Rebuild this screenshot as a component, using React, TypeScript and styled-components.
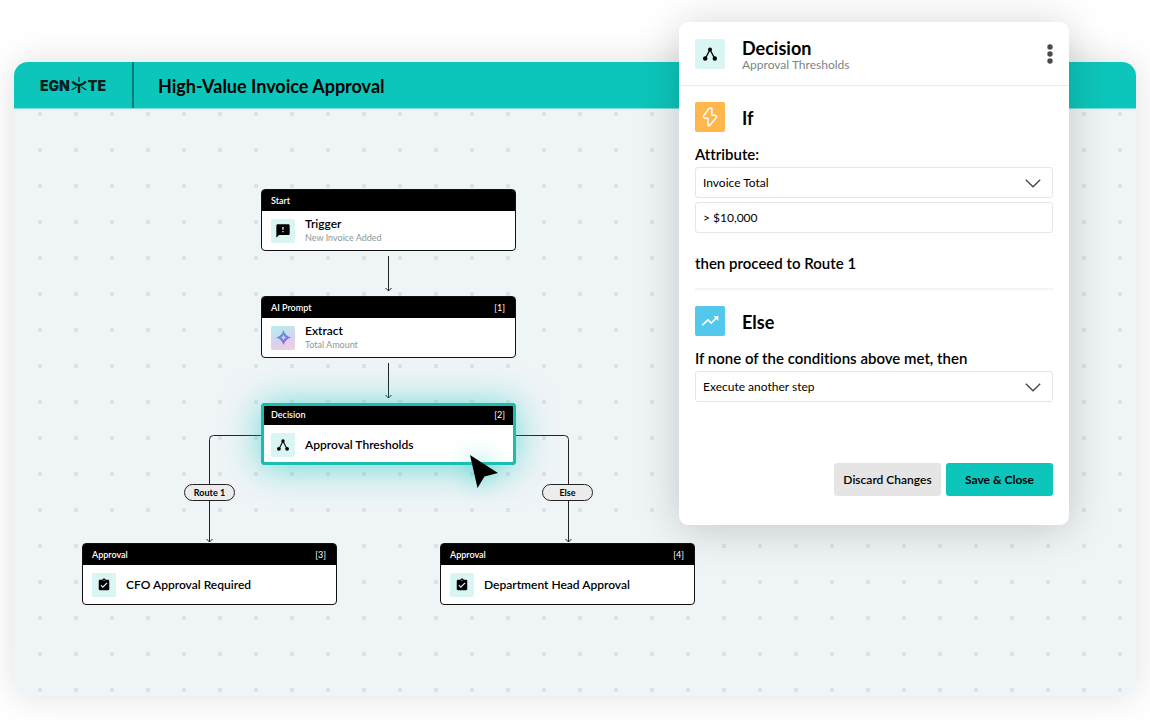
import React from "react";
import styled, { createGlobalStyle, css } from "styled-components";
import { MdAssignmentTurnedIn, MdFeedback, MdTrendingUp } from "react-icons/md";

const teal = "#0dc6bb";

const GlobalStyle = createGlobalStyle`
  *, *::before, *::after { box-sizing: border-box; }
  body {
    margin: 0;
    background: #fff;
    color: #000;
    font-family: Lato, "Liberation Sans", sans-serif;
    font-variant-ligatures: none;
  }
  button, input, select { font-family: inherit; color: inherit; }
  h1, h2, h3, p { margin: 0; }
  svg { display: block; }
`;

const Page = styled.div`
  display: flex;
  min-height: 100vh;
  padding: 62px 14px 24px;
`;

const Window = styled.main`
  position: relative;
  display: flex;
  flex: 1;
  flex-direction: column;
  border-radius: 14px;
  box-shadow: 0 0 36px rgba(0, 0, 0, 0.13);
`;

const TopBar = styled.header`
  display: flex;
  height: 47px;
  border-bottom: 1px solid #7fdcd6;
  border-radius: 14px 14px 0 0;
  background: ${teal};
`;

const Brand = styled.a`
  display: flex;
  align-items: center;
  justify-content: center;
  width: 120px;
  padding-top: 2px;
  border-right: 2px solid #087c76;
  color: #06201f;
  font-family: Inter, sans-serif;
  font-size: 14px;
  font-weight: 900;
  line-height: 16px;
  text-decoration: none;
`;

const PageTitle = styled.h1`
  padding: 1px 0 0 24px;
  font-size: 18px;
  font-weight: 700;
  line-height: 47px;
`;

const Canvas = styled.section`
  position: relative;
  flex: 1;
  min-height: 587px;
  border-radius: 0 0 14px 14px;
  background-color: #eff4f7;
  background-image: conic-gradient(from 90deg at 32px 32px, #dde2e4 90deg, transparent 0);
  background-position: 28px 7px;
  background-size: 36px 36px;
  overflow: hidden;
`;

const Connectors = styled.svg`
  position: absolute;
  top: 0;
  left: 0;
  fill: none;
  stroke: #222;
`;

const NodeBox = styled.article<{ $x: number; $y: number; $selected?: boolean }>`
  position: absolute;
  left: ${(p) => p.$x}px;
  top: ${(p) => p.$y}px;
  width: 255px;
  height: 62px;
  border: 1px solid #111;
  border-radius: 4px;
  background: #fff;
  ${(p) =>
    p.$selected &&
    css`
      box-shadow: 0 2px 36px rgba(13, 198, 187, 0.6);
      &::after {
        content: "";
        position: absolute;
        inset: -1px;
        border: 3px solid #1bbdb3;
        border-radius: 4px;
      }
    `}
`;

const NodeHeader = styled.header`
  display: flex;
  justify-content: space-between;
  padding: 0 10px 0 9px;
  border-radius: 2px 2px 0 0;
  background: #000;
  color: #fff;
  font-size: 9px;
  font-weight: 600;
  line-height: 21px;
`;

const NodeIndex = styled.span`
  font-weight: 400;
`;

const NodeBody = styled.div`
  display: flex;
  align-items: center;
  gap: 10px;
  height: 39px;
  padding: 0 9px;
`;

const NodeTitle = styled.h3`
  font-size: 12px;
  font-weight: 600;
  line-height: 14px;
`;

const NodeNote = styled.p`
  color: #8b9799;
  font-size: 9px;
  line-height: 13px;
`;

const IconTile = styled.span<{ $size: number; $fill?: string }>`
  display: grid;
  flex: none;
  place-items: center;
  width: ${(p) => p.$size}px;
  height: ${(p) => p.$size}px;
  border-radius: 2px;
  background: ${(p) => p.$fill ?? "#d9f5f4"};
`;

const RouteTag = styled.span<{ $x: number; $y: number }>`
  position: absolute;
  left: ${(p) => p.$x}px;
  top: ${(p) => p.$y}px;
  width: 51px;
  border: 1px solid #222;
  border-radius: 9px;
  background: #ececec;
  font-size: 9px;
  font-weight: 700;
  line-height: 15px;
  text-align: center;
`;

const Pointer = styled.svg`
  position: absolute;
  left: 455px;
  top: 345px;
  filter: drop-shadow(0 0 12px rgba(13, 198, 187, 0.6));
`;

const Panel = styled.aside`
  position: absolute;
  top: -40px;
  right: 67px;
  width: 390px;
  border-radius: 9px;
  background: #fff;
  box-shadow: 0 4px 44px rgba(0, 0, 0, 0.19);
`;

const PanelHeader = styled.header`
  display: flex;
  align-items: center;
  gap: 17px;
  height: 64px;
  padding: 1px 16px 0;
  border-bottom: 1px solid #ebebeb;
`;

const Heading = styled.div`
  flex: 1;
`;

const PanelTitle = styled.h2`
  padding-top: 2px;
  font-size: 18px;
  font-weight: 700;
  line-height: 20px;
`;

const PanelNote = styled.p`
  color: #7b8587;
  font-size: 12px;
  line-height: 14px;
`;

const MenuButton = styled.button`
  padding: 0;
  border: 0;
  background: none;
`;

const PanelForm = styled.form`
  padding: 16px 16px 29px;
`;

const RuleHead = styled.div`
  display: flex;
  align-items: center;
  gap: 17px;
  margin-bottom: 12px;
`;

const FieldLabel = styled.label`
  display: block;
  margin-bottom: 3px;
  font-size: 15px;
  font-weight: 600;
  line-height: 20px;
`;

const fieldStyle = css`
  display: block;
  width: 100%;
  height: 31px;
  padding: 0 7px;
  border: 1px solid #e6e6e6;
  border-radius: 3px;
  background: #fff;
  font-size: 12px;
`;

const SelectWrap = styled.div`
  position: relative;
  svg {
    position: absolute;
    top: 12px;
    right: 12px;
    pointer-events: none;
  }
`;

const SelectBox = styled.select`
  ${fieldStyle}
  appearance: none;
`;

const TextBox = styled.input`
  ${fieldStyle}
  margin-top: 4px;
`;

const Outcome = styled.p`
  margin: 20px 0 15px;
  font-size: 15px;
  font-weight: 600;
  line-height: 20px;
`;

const Rule = styled.hr`
  height: 2px;
  margin: 0 0 16px;
  border: 0;
  background: #f4f4f4;
`;

const Actions = styled.div`
  display: flex;
  justify-content: flex-end;
  gap: 5px;
  margin-top: 61px;
`;

const ActionButton = styled.button<{ $primary?: boolean }>`
  width: 107px;
  height: 33px;
  padding: 0;
  border: 0;
  border-radius: 3px;
  background: ${(p) => (p.$primary ? teal : "#e5e5e5")};
  font-size: 12px;
  font-weight: ${(p) => (p.$primary ? 700 : 600)};
`;

const BranchIcon = ({ size }: { size: number }) => (
  <svg width={size} height={size} viewBox="0 0 14 14" aria-hidden="true">
    <path d="M2.400 11.400 7 2.600l4.600 8.800" fill="none" stroke="#000" strokeWidth="1.200" />
    <circle cx="7" cy="2.400" r="2" />
    <circle cx="2.200" cy="11.500" r="2.200" />
    <circle cx="11.800" cy="11.500" r="2.200" />
  </svg>
);

const SparkIcon = () => (
  <svg width="15" height="15" viewBox="0 0 16 16" aria-hidden="true">
    <defs>
      <linearGradient id="spark" x1="0" y1="0" x2="0.6" y2="1">
        <stop offset="0" stopColor="#2fb9ee" />
        <stop offset="1" stopColor="#a95bd6" />
      </linearGradient>
    </defs>
    <path
      fill="url(#spark)"
      fillRule="evenodd"
      d="M8 0Q9.800 6.200 16 8 9.800 9.800 8 16 6.200 9.800 0 8 6.200 6.200 8 0ZM8 5.200Q7.400 7.400 5.200 8 7.400 8.600 8 10.800 8.600 8.600 10.800 8 8.600 7.400 8 5.200Z"
    />
  </svg>
);

const BoltIcon = () => (
  <svg width="16" height="20" viewBox="0 0 16 20" aria-hidden="true">
    <path
      d="M7.200 1.300 1.700 8.600Q.7 10.300 2.400 10.900L6 11.500V17.600Q6.300 19.500 7.900 18.200L14 10.900Q15.200 9.200 13.400 8.600L9.900 7.900V2.100Q9.300.2 7.200 1.300Z"
      fill="none"
      stroke="#fff"
      strokeWidth="1.500"
      strokeLinejoin="round"
    />
  </svg>
);

const Chevron = () => (
  <svg width="16" height="9" viewBox="0 0 16 9" aria-hidden="true">
    <path d="M.8.8 8 7.800 15.200.8" fill="none" stroke="#444" strokeWidth="1.300" />
  </svg>
);

const LogoStar = () => (
  <svg width="18" height="18" viewBox="0 0 18 18" aria-hidden="true">
    <g fill="none" stroke="#06201f">
      <path d="M9 0v5" strokeWidth="1.200" />
      <path d="M2.200 4.500Q5.500 8.200 9 8.200T15.800 4.500M9 8v8" strokeWidth="2.400" />
      <path d="M6.500 10 1.500 13M11.500 10l5 3" strokeWidth="1.200" />
    </g>
  </svg>
);

type NodeProps = {
  x: number;
  y: number;
  kind: string;
  index?: string;
  title: string;
  note?: string;
  selected?: boolean;
  tile?: string;
  icon: React.ReactNode;
};

const FlowNode = ({ x, y, kind, index, title, note, selected, tile, icon }: NodeProps) => (
  <NodeBox $x={x} $y={y} $selected={selected}>
    <NodeHeader>
      <span>{kind}</span>
      {index && <NodeIndex>[{index}]</NodeIndex>}
    </NodeHeader>
    <NodeBody>
      <IconTile $size={24} $fill={tile}>{icon}</IconTile>
      <div>
        <NodeTitle>{title}</NodeTitle>
        {note && <NodeNote>{note}</NodeNote>}
      </div>
    </NodeBody>
  </NodeBox>
);

export default function App() {
  return (
    <>
      <GlobalStyle />
      <Page>
        <Window>
          <TopBar>
            <Brand href="#" aria-label="Egnyte">
              EGN
              <LogoStar />
              TE
            </Brand>
            <PageTitle>High-Value Invoice Approval</PageTitle>
          </TopBar>
          <Canvas>
            <Connectors width="700" height="587" aria-hidden="true">
              <path d="M374.500 147v35m-3-3 3 3 3-3" />
              <path d="M374.500 254v35m-3-3 3 3 3-3" />
              <path d="M248 326.500h-48.500q-4 0-4 4V433m-3-3 3 3 3-3" />
              <path d="M501 326.500h49.500q4 0 4 4V433m-3-3 3 3 3-3" />
            </Connectors>
            <FlowNode x={247} y={80} kind="Start" title="Trigger" note="New Invoice Added" icon={<MdFeedback size={16} />} />
            <FlowNode
              x={247}
              y={187}
              kind="AI Prompt"
              index="1"
              title="Extract"
              note="Total Amount"
              tile="linear-gradient(160deg, #b5efec, #d5d3ee 55%, #f6cfdc)"
              icon={<SparkIcon />}
            />
            <FlowNode x={247} y={294} kind="Decision" index="2" title="Approval Thresholds" selected icon={<BranchIcon size={12} />} />
            <FlowNode x={68} y={434} kind="Approval" index="3" title="CFO Approval Required" icon={<MdAssignmentTurnedIn size={14} />} />
            <FlowNode x={426} y={434} kind="Approval" index="4" title="Department Head Approval" icon={<MdAssignmentTurnedIn size={14} />} />
            <RouteTag $x={170} $y={375}>Route 1</RouteTag>
            <RouteTag $x={528} $y={375}>Else</RouteTag>
            <Pointer width="30" height="35" viewBox="0 0 30 35" aria-hidden="true">
              <path d="M1 1 29 19 15.500 22.500 8.500 34Z" />
            </Pointer>
          </Canvas>
          <Panel>
            <PanelHeader>
              <IconTile $size={30}><BranchIcon size={14} /></IconTile>
              <Heading>
                <PanelTitle>Decision</PanelTitle>
                <PanelNote>Approval Thresholds</PanelNote>
              </Heading>
              <MenuButton type="button" aria-label="More options">
                <svg width="6" height="20" viewBox="0 0 6 20" fill="#4a4a4a" aria-hidden="true">
                  <circle cx="3" cy="3" r="2.700" />
                  <circle cx="3" cy="10" r="2.700" />
                  <circle cx="3" cy="17" r="2.700" />
                </svg>
              </MenuButton>
            </PanelHeader>
            <PanelForm>
              <RuleHead>
                <IconTile $size={30} $fill="#ffb74d"><BoltIcon /></IconTile>
                <PanelTitle as="h3">If</PanelTitle>
              </RuleHead>
              <FieldLabel htmlFor="attribute">Attribute:</FieldLabel>
              <SelectWrap>
                <SelectBox id="attribute">
                  <option>Invoice Total</option>
                </SelectBox>
                <Chevron />
              </SelectWrap>
              <TextBox aria-label="Attribute value" defaultValue="> $10,000" />
              <Outcome>then proceed to Route 1</Outcome>
              <Rule />
              <RuleHead>
                <IconTile $size={30} $fill="#54c8ec"><MdTrendingUp size={20} color="#fff" /></IconTile>
                <PanelTitle as="h3">Else</PanelTitle>
              </RuleHead>
              <FieldLabel htmlFor="fallback">If none of the conditions above met, then</FieldLabel>
              <SelectWrap>
                <SelectBox id="fallback">
                  <option>Execute another step</option>
                </SelectBox>
                <Chevron />
              </SelectWrap>
              <Actions>
                <ActionButton type="button">Discard Changes</ActionButton>
                <ActionButton type="button" $primary>Save &amp; Close</ActionButton>
              </Actions>
            </PanelForm>
          </Panel>
        </Window>
      </Page>
    </>
  );
}
